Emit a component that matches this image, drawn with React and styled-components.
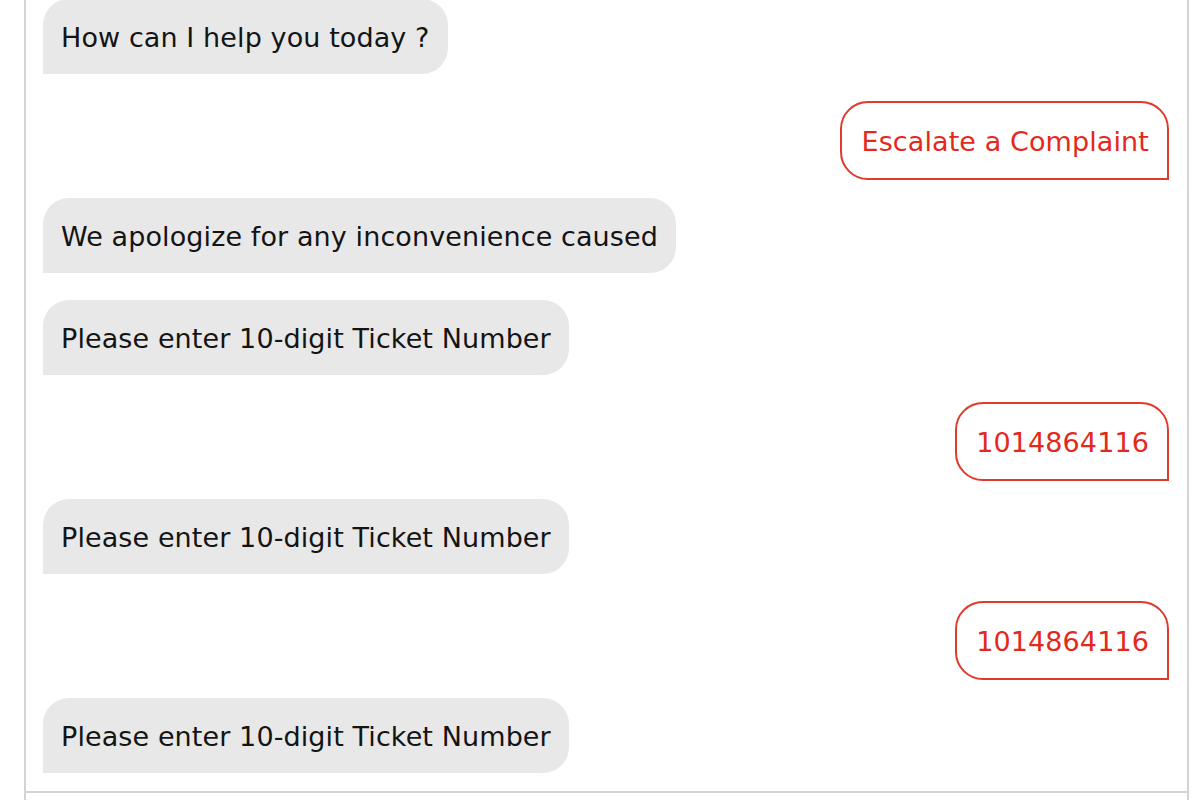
import React from "react";
import styled, { createGlobalStyle } from "styled-components";

const GlobalStyle = createGlobalStyle`
  html, body {
    margin: 0;
    padding: 0;
    background: #ffffff;
    font-family: "DejaVu Sans", Verdana, sans-serif;
  }
`;

const Panel = styled.div`
  margin: -1px 0 0 24px;
  width: 1165px;
  height: 801px;
  box-sizing: border-box;
  border-left: 2px solid #d4d4d4;
  border-right: 2px solid #d4d4d4;
  display: flex;
  flex-direction: column;
  overflow: hidden;
`;

const Messages = styled.div`
  display: flex;
  flex-direction: column;
  padding: 0 18px 0 17px;
`;

const Row = styled.div`
  display: flex;
  justify-content: ${(p) => (p.$from === "user" ? "flex-end" : "flex-start")};
  margin-bottom: ${(p) => (p.$from === "user" ? "18px" : "27px")};
  &:last-child {
    margin-bottom: 18px;
  }
`;

const BotBubble = styled.div`
  background: #e8e8e8;
  color: #141414;
  font-size: 27px;
  letter-spacing: 0.1px;
  line-height: 37px;
  padding: 20px 18px 18px;
  border-radius: 26px 26px 26px 0;
`;

const UserBubble = styled.div`
  background: #ffffff;
  color: #e3291c;
  border: 2px solid #e03a2c;
  font-size: 27px;
  letter-spacing: 0.1px;
  line-height: 37px;
  padding: 20px 18px 18px 19px;
  border-radius: 28px 28px 0 28px;
`;

const InputBar = styled.div`
  border-top: 2px solid #d4d4d4;
  flex: 1;
`;

const messages = [
  { from: "bot", text: "How can I help you today ?" },
  { from: "user", text: "Escalate a Complaint" },
  { from: "bot", text: "We apologize for any inconvenience caused" },
  { from: "bot", text: "Please enter 10-digit Ticket Number" },
  { from: "user", text: "1014864116" },
  { from: "bot", text: "Please enter 10-digit Ticket Number" },
  { from: "user", text: "1014864116" },
  { from: "bot", text: "Please enter 10-digit Ticket Number" },
];

export default function App() {
  return (
    <>
      <GlobalStyle />
      <Panel>
        <Messages>
          {messages.map((m, i) => (
            <Row key={i} $from={m.from}>
              {m.from === "user" ? (
                <UserBubble>{m.text}</UserBubble>
              ) : (
                <BotBubble>{m.text}</BotBubble>
              )}
            </Row>
          ))}
        </Messages>
        <InputBar />
      </Panel>
    </>
  );
}
